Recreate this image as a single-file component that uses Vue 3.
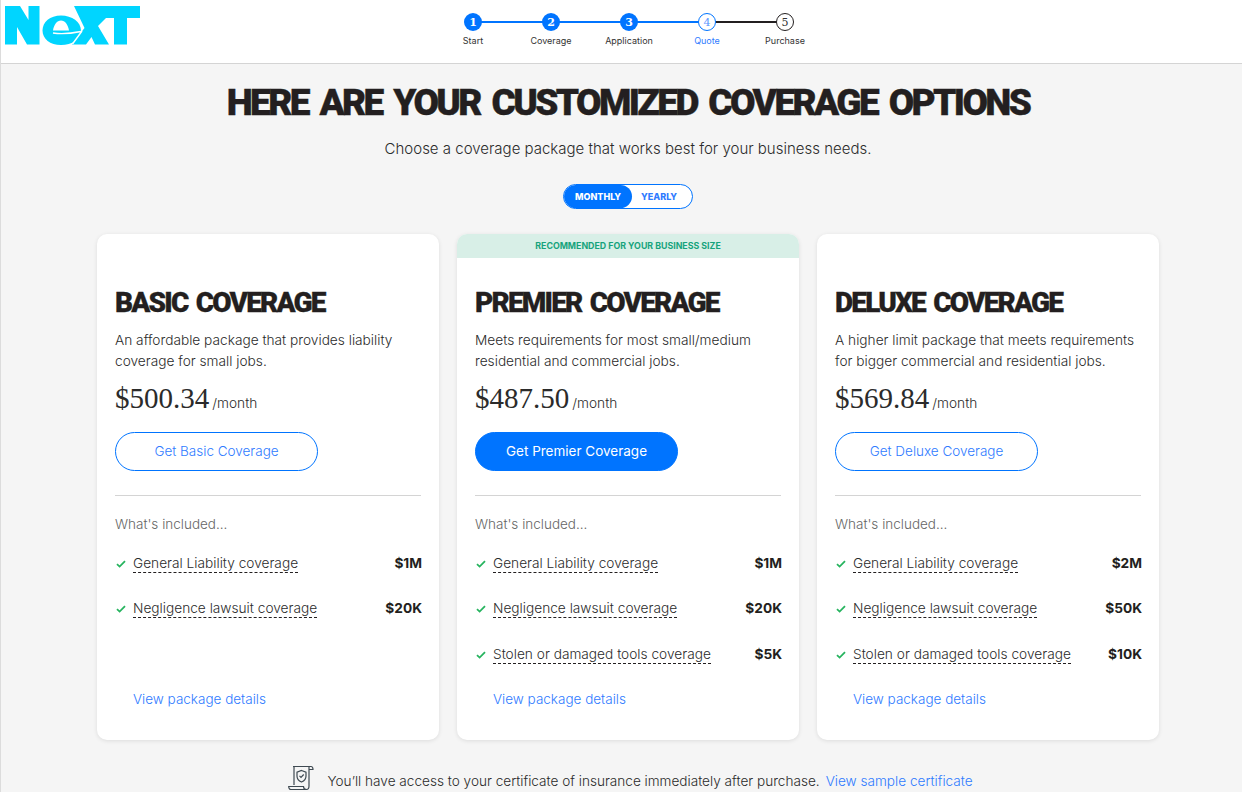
<script setup>
const steps = [
  { n: 1, label: 'Start', state: 'done' },
  { n: 2, label: 'Coverage', state: 'done' },
  { n: 3, label: 'Application', state: 'done' },
  { n: 4, label: 'Quote', state: 'current' },
  { n: 5, label: 'Purchase', state: 'todo' }
]
const plans = [
  {
    name: 'Basic Coverage',
    desc: ['An affordable package that provides liability', 'coverage for small jobs.'],
    price: '$500.34',
    cta: 'Get Basic Coverage',
    items: [['General Liability coverage', '$1M'], ['Negligence lawsuit coverage', '$20K']]
  },
  {
    name: 'Premier Coverage',
    desc: ['Meets requirements for most small/medium', 'residential and commercial jobs.'],
    price: '$487.50',
    cta: 'Get Premier Coverage',
    featured: true,
    items: [['General Liability coverage', '$1M'], ['Negligence lawsuit coverage', '$20K'], ['Stolen or damaged tools coverage', '$5K']]
  },
  {
    name: 'Deluxe Coverage',
    desc: ['A higher limit package that meets requirements', 'for bigger commercial and residential jobs.'],
    price: '$569.84',
    cta: 'Get Deluxe Coverage',
    items: [['General Liability coverage', '$2M'], ['Negligence lawsuit coverage', '$50K'], ['Stolen or damaged tools coverage', '$10K']]
  }
]
</script>

<template>
  <div class="page">
    <header class="header">
      <svg class="logo" width="136" height="40" viewBox="0 0 136 40" aria-label="Next">
        <g fill="#00d5ff">
          <path d="M0 0H15L23.500 14V0H34.500V38.500H22L12 21V38.500H0Z" />
          <path fill-rule="evenodd" d="M37.500 24.500C37.500 16 45 9.500 56 9.500C67 9.500 76 16 76 24.500C76 33 67 39 56 39C45 39 37.500 33 37.500 24.500ZM48 24.500H64C63 18.500 60 14.500 56 14.500C52 14.500 49 18.500 48 24.500Z" />
          <path d="M69 0H135V12H122V38.500H109V12H101L93 20L104 38.500H90L86.500 31L81 38.500H67L79.500 22Z" />
        </g>
        <path d="M48 27C54 28 66 27.500 76 25.500M67.500 38L77 25" fill="none" stroke="#fff" stroke-width="1.400" />
      </svg>
      <ol class="stepper">
        <li v-for="s in steps" :key="s.n" class="step" :class="s.state">
          <span class="dot">{{ s.n }}</span>
          <span class="step-label">{{ s.label }}</span>
        </li>
      </ol>
    </header>

    <main class="main">
      <h1 class="title">Here are your customized coverage options</h1>
      <p class="subtitle">Choose a coverage package that works best for your business needs.</p>
      <div class="toggle">
        <span class="toggle-on">MONTHLY</span>
        <span class="toggle-off">YEARLY</span>
      </div>

      <section class="cards">
        <article v-for="p in plans" :key="p.name" class="card">
          <div class="banner" :class="{ visible: p.featured }">
            <template v-if="p.featured">RECOMMENDED FOR YOUR BUSINESS SIZE</template>
          </div>
          <div class="card-body">
            <h2 class="plan-name">{{ p.name }}</h2>
            <p class="plan-desc"><span v-for="line in p.desc" :key="line">{{ line }}</span></p>
            <div class="price-row"><span class="price">{{ p.price }}</span><span class="per">/month</span></div>
            <button class="cta" :class="{ solid: p.featured }">{{ p.cta }}</button>
            <hr class="rule" />
            <div class="included">What's included...</div>
            <ul class="items">
              <li v-for="it in p.items" :key="it[0]" class="item">
                <svg class="check" width="10" height="8" viewBox="0 0 10 8"><path d="M1 4.200L3.600 6.600L9 1.200" fill="none" stroke="#27b45f" stroke-width="1.800" /></svg>
                <span class="item-name">{{ it[0] }}</span>
                <span class="item-val">{{ it[1] }}</span>
              </li>
            </ul>
            <a class="details">View package details</a>
          </div>
        </article>
      </section>

      <div class="note">
        <svg class="cert" width="26" height="26" viewBox="0 0 26 26" fill="none" stroke="#3f4a52" stroke-width="1.200">
          <path d="M5 1.500H23C24.500 1.500 25 3 25 4.500H21" />
          <path d="M5 1.500C6.500 1.500 6 3 6 4V20" />
          <path d="M21 1.500V21C21 23 20 24.500 18.500 24.500H3C1.500 24.500 .7 23 .7 21.500H15.500C15.500 23 16.500 24.500 18.500 24.500" />
          <path d="M13.500 5.500L18 7.200V11C18 14 16 16 13.500 17C11 16 9 14 9 11V7.200Z" />
          <path d="M11.500 10.800L13 12.300L15.700 9.500" />
        </svg>
        <span>You’ll have access to your certificate of insurance immediately after purchase.</span>
        <a class="note-link">View sample certificate</a>
      </div>
    </main>
  </div>
</template>

<style>
html, body { margin: 0; background: #f5f5f5; }
</style>

<style scoped>
.page {
  height: 792px;
  overflow: hidden;
  background: #f5f5f5;
  border-left: 1px solid #dcdcdc;
  box-sizing: border-box;
  font-family: Inter, "Liberation Sans", sans-serif;
  color: #2b2b2b;
}
.header {
  height: 64px;
  box-sizing: border-box;
  background: #fff;
  border-bottom: 1px solid #d4d4d4;
  display: flex;
  align-items: flex-start;
}
.logo { margin: 6px 0 0 4px; flex: none; }
.stepper {
  list-style: none;
  margin: 13px 0 0 293px;
  padding: 0;
  display: flex;
}
.step {
  position: relative;
  width: 78px;
  display: flex;
  flex-direction: column;
  align-items: center;
}
.step:not(:last-child)::after {
  content: '';
  position: absolute;
  top: 8px;
  left: 39px;
  width: 78px;
  height: 2px;
  background: #0074ff;
}
.step.current::after { background: #231f20; }
.dot {
  position: relative;
  z-index: 1;
  width: 18px;
  height: 18px;
  box-sizing: border-box;
  border-radius: 50%;
  display: flex;
  align-items: center;
  justify-content: center;
  font: 700 11px/1 "DejaVu Serif", serif;
}
.done .dot { background: #0074ff; color: #fff; }
.current .dot { background: #fff; border: 1px solid #0074ff; color: #5a96ff; font-weight: 400; }
.todo .dot { background: #fff; border: 1px solid #231f20; color: #333; font-weight: 400; }
.step-label { margin-top: 4px; font-size: 9px; line-height: 11px; color: #333; white-space: nowrap; }
.current .step-label { color: #2f7bff; }

.main { display: flex; flex-direction: column; align-items: center; padding-left: 13px; }
.title {
  margin: 18px 0 0;
  font-family: Roboto, sans-serif;
  font-weight: 900;
  font-size: 37px;
  line-height: 42px;
  letter-spacing: -2.600px;
  word-spacing: 5px;
  -webkit-text-stroke: .4px #231f20;
  text-transform: uppercase;
  color: #231f20;
  white-space: nowrap;
}
.subtitle { margin: 13px 0 0; font-size: 15px; font-weight: 300; line-height: 24px; color: #2b2b2b; }
.toggle {
  margin-top: 23px;
  width: 130px;
  height: 25px;
  box-sizing: border-box;
  border: 1px solid #0074ff;
  border-radius: 13px;
  background: #fff;
  display: flex;
  font-size: 9px;
  font-weight: 800;
  overflow: hidden;
}
.toggle-on { width: 68px; background: #0074ff; color: #fff; border-radius: 13px; display: flex; align-items: center; justify-content: center; }
.toggle-off { flex: 1; box-sizing: border-box; padding-right: 6px; color: #2f7bff; display: flex; align-items: center; justify-content: center; }

.cards { margin-top: 25px; display: flex; gap: 18px; }
.card {
  width: 342px;
  height: 506px;
  background: #fff;
  border-radius: 10px;
  box-shadow: 0 1px 4px rgba(0, 0, 0, .1);
  overflow: hidden;
  display: flex;
  flex-direction: column;
}
.banner {
  height: 24px;
  flex: none;
  text-align: center;
  font-size: 8.800px;
  font-weight: 700;
  line-height: 23px;
  color: #16a37c;
}
.banner.visible { background: #d8efe7; }
.card-body { padding: 29px 18px 0; display: flex; flex-direction: column; flex: 1; }
.plan-name {
  margin: 0;
  font-family: Roboto, sans-serif;
  font-weight: 900;
  font-size: 28px;
  line-height: 32px;
  letter-spacing: -1.800px;
  word-spacing: 3px;
  -webkit-text-stroke: .3px #231f20;
  text-transform: uppercase;
  color: #231f20;
  white-space: nowrap;
}
.plan-desc { margin: 11px 0 0; font-size: 13.700px; font-weight: 300; line-height: 21px; color: #2b2b2b; }
.plan-desc span { display: block; white-space: nowrap; }
.price-row { margin-top: 8px; display: flex; align-items: baseline; gap: 3px; height: 36px; }
.price { font-family: "Liberation Serif", serif; font-size: 29px; line-height: 36px; color: #2b2b2b; }
.per { font-size: 13.700px; font-weight: 300; color: #2b2b2b; }
.cta {
  margin-top: 16px;
  width: 203px;
  height: 39px;
  padding: 0 0 2px;
  border: 1px solid #0074ff;
  border-radius: 20px;
  background: #fff;
  color: #2f7bff;
  font: 300 13.500px Inter, sans-serif;
}
.cta.solid { background: #0074ff; color: #fff; font-weight: 400; }
.rule { margin: 24px 0 0; border: 0; border-top: 1px solid #d4d4d4; width: 100%; }
.included { margin-top: 18px; font-size: 13.500px; font-weight: 300; line-height: 20px; color: #666; }
.items { list-style: none; margin: 20.500px -1px 0 0; padding: 0; height: 134.500px; }
.item { height: 45.500px; display: flex; align-items: flex-start; font-size: 13.700px; line-height: 20px; }
.check { margin: 5px 7px 0 1px; flex: none; }
.item-name { font-weight: 300; color: #2b2b2b; border-bottom: 1px dashed #231f20; line-height: 17px; white-space: nowrap; }
.item-val { margin-left: auto; font-weight: 700; color: #231f20; line-height: 17px; }
.details { margin: 0 0 0 18px; font-size: 13.500px; font-weight: 300; line-height: 20px; color: #2f7bff; }
.note { margin-top: 25px; margin-left: 5px; display: flex; align-items: flex-end; font-size: 13.600px; font-weight: 300; color: #2b2b2b; line-height: 20px; white-space: nowrap; }
.cert { margin-right: 13px; flex: none; }
.note-link { margin-left: 6px; color: #2f7bff; }
</style>
